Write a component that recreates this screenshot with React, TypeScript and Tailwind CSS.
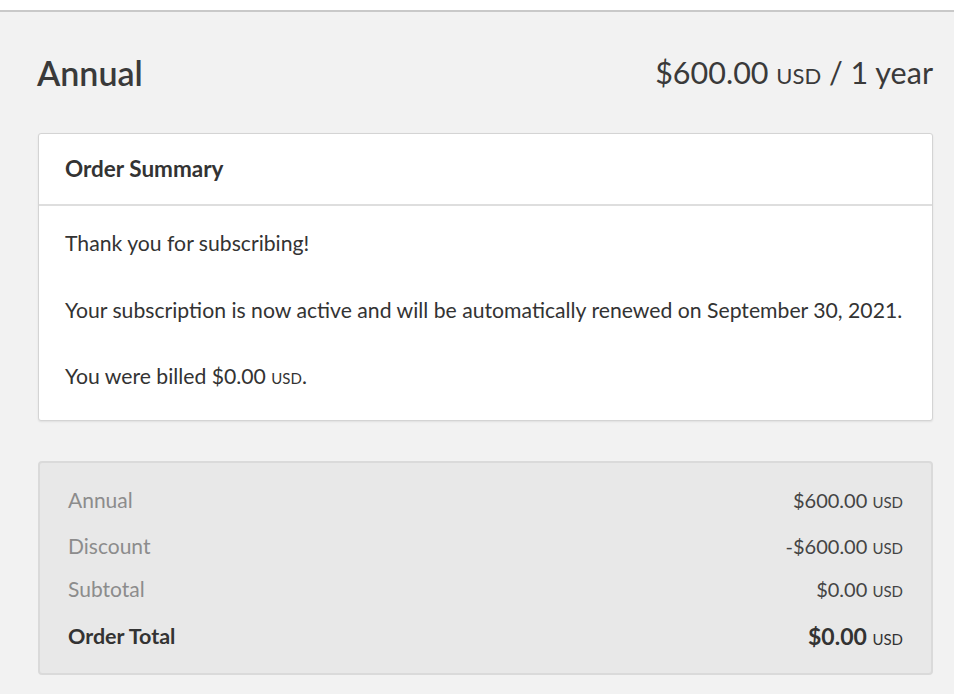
import React from 'react'

const font = { fontFamily: 'Lato, "Noto Sans", sans-serif' }

function Usd({ className = '' }: { className?: string }) {
  return <span className={`text-[15px] uppercase ${className}`}>USD</span>
}

const rows = [
  { label: 'Annual', value: '$600.00', cls: 'mt-[22px]' },
  { label: 'Discount', value: '-$600.00', cls: 'mt-[14px]' },
  { label: 'Subtotal', value: '$0.00', cls: 'mt-[11px]' },
]

export default function App() {
  return (
    <div style={font} className="min-h-screen bg-[#f2f2f2] text-[#3b3b3b]">
      <div className="h-[10px] border-b-2 border-[#c9c9c9] bg-white box-content" />
      <div className="ml-[37px] w-[896px]">
        <div className="flex h-[121px] items-center justify-between">
          <h1 className="text-[34px] font-semibold text-[#3a3a3a]">Annual</h1>
          <p className="text-[30.5px] text-[#3a3a3a]">
            $600.00 <span className="text-[22px] uppercase">USD</span> / 1 year
          </p>
        </div>

        <section className="ml-px h-[288px] rounded-[3px] border border-[#d4d4d4] bg-white shadow-[0_1px_2px_rgba(0,0,0,0.08)]">
          <div className="flex h-[72px] items-center border-b-2 border-[#dedede] px-[26px]">
            <h2 className="text-[22.5px] font-bold text-[#333]">Order Summary</h2>
          </div>
          <div className="px-[26px] pt-[22px] text-[21.2px] leading-[30px] text-[#333]">
            <p>Thank you for subscribing!</p>
            <p className="mt-[37px]">
              Your subscription is now active and will be automatically renewed on September 30, 2021.
            </p>
            <p className="mt-[36px]">
              You were billed $0.00 <Usd />.
            </p>
          </div>
        </section>

        <section className="ml-px mt-[40px] h-[214px] rounded-[4px] border-2 border-[#dadada] bg-[#e8e8e8] px-[28px] text-[20px] leading-[30px]">
          {rows.map((r) => (
            <div key={r.label} className={`flex justify-between ${r.cls}`}>
              <span className="text-[21px] text-[#8c8c8c]">{r.label}</span>
              <span className="text-[#444]">
                {r.value} <Usd />
              </span>
            </div>
          ))}
          <div className="mt-[15px] flex justify-between font-bold text-[#333]">
            <span className="text-[21.5px]">Order Total</span>
            <span className="text-[23px]">
              $0.00 <Usd className="font-normal" />
            </span>
          </div>
        </section>
      </div>
    </div>
  )
}
